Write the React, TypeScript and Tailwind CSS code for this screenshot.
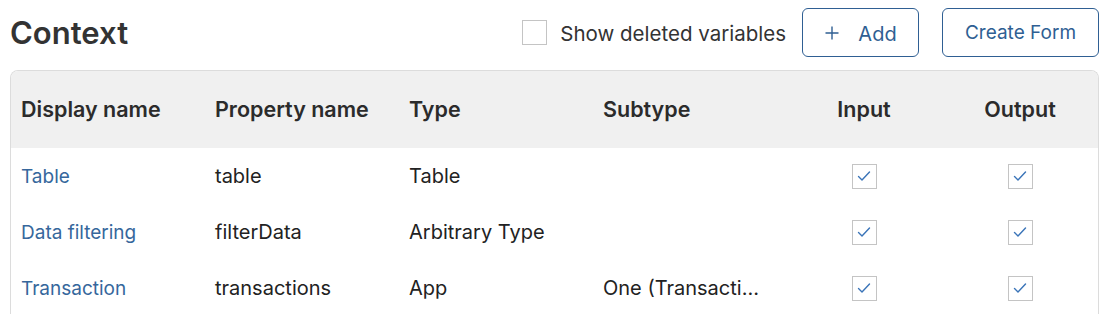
import React from "react";

const rows = [
  { display: "Table", prop: "table", type: "Table", sub: "" },
  { display: "Data filtering", prop: "filterData", type: "Arbitrary Type", sub: "" },
  { display: "Transaction", prop: "transactions", type: "App", sub: "One (Transaction)" },
];

function Check() {
  return (
    <div className="w-[25px] h-[25px] border border-[#c4c4c4] bg-white flex items-center justify-center">
      <svg width="16" height="16" viewBox="0 0 16 16" fill="none">
        <path d="M2.5 8.5 L6 12 L13.5 4" stroke="#3a74b8" strokeWidth="1.4" strokeLinecap="round" strokeLinejoin="round" />
      </svg>
    </div>
  );
}

const grid = "grid grid-cols-[194px_194px_194px_194px_134px_158px]";

export default function App() {
  return (
    <div className="w-[1110px] h-[314px] overflow-hidden bg-white text-[#222]" style={{ fontFamily: "Inter, 'Noto Sans', sans-serif" }}>
      <div className="flex items-center pl-[10px] pr-[11px] pt-[8px]">
        <h1 className="text-[31px] font-semibold text-[#333] leading-none">Context</h1>
        <div className="ml-auto flex items-center">
          <div className="w-[25px] h-[25px] border border-[#c4c4c4] bg-white" />
          <span className="ml-[13px] pt-[3px] text-[20.5px] text-[#333]">Show deleted variables</span>
          <button className="ml-[16px] h-[49px] w-[117px] rounded-[6px] border border-[#2f5f93] text-[#2f5f93] text-[20px] flex items-center justify-center gap-[18px]">
            <svg width="16" height="16" viewBox="0 0 16 16"><path d="M8 1.5 V14.5 M1.5 8 H14.5" stroke="#2f5f93" strokeWidth="1.4" /></svg>
            <span className="pt-[2px]">Add</span>
          </button>
          <button className="ml-[23px] h-[49px] w-[157px] pt-[2px] rounded-[6px] border border-[#2f5f93] text-[#2f5f93] text-[19px]">
            Create Form
          </button>
        </div>
      </div>
      <div className="mt-[13px] ml-[10px] w-[1089px] rounded-t-[8px] border border-[#dcdcdc] border-b-0 overflow-hidden">
        <div className={`${grid} h-[77px] items-center bg-[#f0f0f0] pl-[10px] text-[21.5px] font-semibold text-[#2b2b2b]`}>
          <div>Display name</div>
          <div>Property name</div>
          <div>Type</div>
          <div>Subtype</div>
          <div className="text-center">Input</div>
          <div className="text-center pl-[20px]">Output</div>
        </div>
        {rows.map((r) => (
          <div key={r.prop} className={`${grid} h-[56px] items-center pl-[10px] text-[20px]`}>
            <div className="text-[#36679c] text-[19px] pt-[2px]">{r.display}</div>
            <div>{r.prop}</div>
            <div>{r.type}</div>
            <div className="truncate pr-[33px]">{r.sub}</div>
            <div className="flex justify-center"><Check /></div>
            <div className="flex justify-center pl-[20px]"><Check /></div>
          </div>
        ))}
      </div>
    </div>
  );
}
